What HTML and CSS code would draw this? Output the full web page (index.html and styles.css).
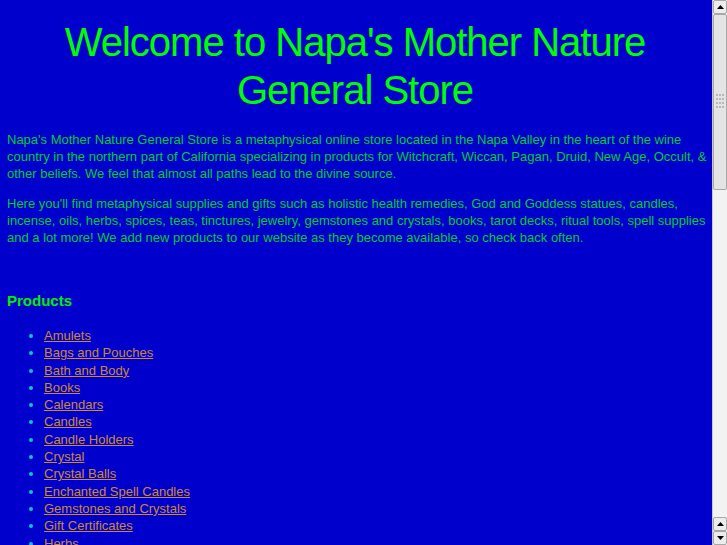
FILE: index.html
```html
<!DOCTYPE html>
<html>
<head>
<meta charset="utf-8">
<title>Napa's Mother Nature General Store</title>
<link rel="stylesheet" href="styles.css">
</head>
<body>
<h1 class="title">Welcome to Napa's Mother Nature General Store</h1>
<p class="intro">Napa's Mother Nature General Store is a metaphysical online store located in the Napa Valley in the heart of the wine country in the northern part of California specializing in products for Witchcraft, Wiccan, Pagan, Druid, New Age, Occult, &amp; other beliefs. We feel that almost all paths lead to the divine source.</p>
<p class="intro">Here you'll find metaphysical supplies and gifts such as holistic health remedies, God and Goddess statues, candles, incense, oils, herbs, spices, teas, tinctures, jewelry, gemstones and crystals, books, tarot decks, ritual tools, spell supplies and a lot more! We add new products to our website as they become available, so check back often.</p>
<h2 class="section">Products</h2>
<ul class="products">
<li><a href="#">Amulets</a></li>
<li><a href="#">Bags and Pouches</a></li>
<li><a href="#">Bath and Body</a></li>
<li><a href="#">Books</a></li>
<li><a href="#">Calendars</a></li>
<li><a href="#">Candles</a></li>
<li><a href="#">Candle Holders</a></li>
<li><a href="#">Crystal</a></li>
<li><a href="#">Crystal Balls</a></li>
<li><a href="#">Enchanted Spell Candles</a></li>
<li><a href="#">Gemstones and Crystals</a></li>
<li><a href="#">Gift Certificates</a></li>
<li><a href="#">Herbs</a></li>
<li><a href="#">Incense</a></li>
<li><a href="#">Jewelry</a></li>
<li><a href="#">Oils</a></li>
<li><a href="#">Ritual Tools</a></li>
<li><a href="#">Statues</a></li>
<li><a href="#">Tarot Decks</a></li>
</ul>
<div class="scrollbar" aria-hidden="true">
  <div class="sb-btn"><svg width="7" height="4" viewBox="0 0 7 4"><path d="M0 4 L3.5 0 L7 4 Z" fill="#000"/></svg></div>
  <div class="sb-thumb">
    <svg class="grip" width="8" height="16" viewBox="0 0 8 16">
      <g fill="#b8b8b8">
        <rect x="0" y="0" width="2" height="2"/><rect x="3" y="0" width="2" height="2"/><rect x="6" y="0" width="2" height="2"/>
        <rect x="0" y="4" width="2" height="2"/><rect x="3" y="4" width="2" height="2"/><rect x="6" y="4" width="2" height="2"/>
        <rect x="0" y="8" width="2" height="2"/><rect x="3" y="8" width="2" height="2"/><rect x="6" y="8" width="2" height="2"/>
        <rect x="0" y="12" width="2" height="2"/><rect x="3" y="12" width="2" height="2"/><rect x="6" y="12" width="2" height="2"/>
      </g>
    </svg>
  </div>
  <div class="sb-track"></div>
  <div class="sb-btn"><svg width="7" height="4" viewBox="0 0 7 4"><path d="M0 4 L3.5 0 L7 4 Z" fill="#000"/></svg></div>
  <div class="sb-btn"><svg width="7" height="4" viewBox="0 0 7 4"><path d="M0 0 L3.5 4 L7 0 Z" fill="#000"/></svg></div>
</div>
</body>
</html>
```
FILE: styles.css
```css
html {
  background: #0000cc;
  overflow: hidden;
}
body {
  margin: 8px 17px 8px 7px;
  background: #0000cc;
  font-family: "Liberation Sans", Arial, sans-serif;
  font-size: 13px;
  line-height: 17px;
  color: #00cc33;
}
.title {
  margin: 10px 7px 17px 0;
  text-align: center;
  font-size: 40px;
  line-height: 48px;
  font-weight: normal;
  letter-spacing: -1px;
  color: #00ff00;
}
.intro {
  margin: 0 0 13px;
}
.section {
  margin: 46px 0 17px;
  font-size: 15px;
  line-height: 18px;
  font-weight: bold;
  color: #00ee00;
}
.products {
  margin: 0;
  padding-left: 37px;
  color: #00cccc;
}
.products li {
  line-height: 17.3px;
}
.products a {
  color: #cc8833;
  text-decoration: underline;
}
.scrollbar {
  position: fixed;
  top: 0;
  right: 0;
  bottom: 0;
  width: 14px;
  display: flex;
  flex-direction: column;
  background: #f2f2f2;
  border-left: 1px solid #c8c8c8;
}
.sb-btn {
  height: 14px;
  flex: none;
  display: flex;
  align-items: center;
  justify-content: center;
  background: #ececec;
  border: 1px solid #a8a8a8;
  border-radius: 2px;
  box-sizing: border-box;
}
.sb-thumb {
  height: 176px;
  flex: none;
  display: flex;
  align-items: center;
  justify-content: center;
  background: #e4e4e4;
  border: 1px solid #a8a8a8;
  border-radius: 2px;
  box-sizing: border-box;
}
.sb-track {
  flex: 1;
}
```
